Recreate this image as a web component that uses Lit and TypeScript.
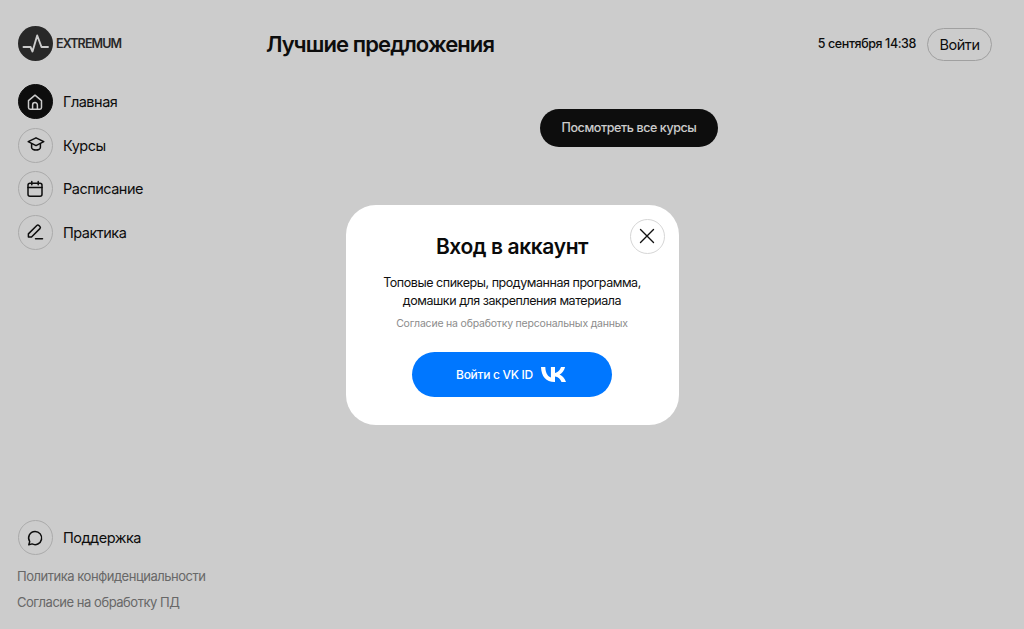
import { LitElement, html, css, svg } from 'lit';
import { customElement } from 'lit/decorators.js';

const navItems = [
  {
    label: 'Главная',
    active: true,
    icon: svg`<path d="M3.5 8.6 10 3.2l6.500 5.400v7a1.600 1.600 0 0 1-1.600 1.600H5.100a1.600 1.600 0 0 1-1.600-1.600z"/><path d="M7.600 17v-4a2.400 2.400 0 0 1 4.800 0v4"/>`,
  },
  {
    label: 'Курсы',
    icon: svg`<path d="M11 2.800 3.200 6.600 11 10.600l7.800-4z"/><path d="M6.600 8.800v3.800c0 1.200 2 2.400 4.400 2.400s4.400-1.200 4.400-2.400V8.800"/>`,
  },
  {
    label: 'Расписание',
    icon: svg`<rect x="3" y="4.200" width="14" height="13" rx="2"/><path d="M3 8.400h14M6.800 2.400v3.400M13.200 2.400v3.400"/>`,
  },
  {
    label: 'Практика',
    icon: svg`<path d="M3.400 15v-3.100l8.400-8.400a1.500 1.500 0 0 1 2.100 0l1 1a1.500 1.500 0 0 1 0 2.100l-8.400 8.400z"/><path d="M10.500 16.800h7"/>`,
  },
];

const icon = (body: unknown) => html`<svg class="ico" viewBox="1 0 20 20">${body}</svg>`;

@customElement('app-root')
export class AppRoot extends LitElement {
  static styles = css`
    :host {
      display: block;
      height: 629px;
      background: #fff;
      color: #111;
      font-family: Inter, "Liberation Sans", sans-serif;
      overflow: hidden;
    }
    .page {
      display: grid;
      grid-template-columns: 266px 1fr;
      height: 629px;
    }
    .side {
      display: flex;
      flex-direction: column;
      padding: 26px 0 19px 18px;
    }
    .logo {
      display: flex;
      align-items: center;
      gap: 3px;
      font-size: 12.5px;
      font-weight: 600;
      letter-spacing: -0.9px;
      color: #333;
    }
    .logo svg {
      width: 35px;
      height: 35px;
      display: block;
    }
    .nav {
      display: flex;
      flex-direction: column;
      gap: 8.6px;
      margin-top: 23px;
    }
    .item {
      display: flex;
      align-items: center;
      gap: 10px;
      font-size: 14.5px;
      font-weight: 400;
      letter-spacing: -0.5px;
    }
    .circle {
      width: 35px;
      height: 35px;
      box-sizing: border-box;
      border-radius: 50%;
      border: 1px solid #d6d6d6;
      display: flex;
      align-items: center;
      justify-content: center;
      flex: none;
    }
    .active .circle {
      background: #111;
      border-color: #111;
      color: #fff;
    }
    .ico {
      width: 20px;
      height: 20px;
      fill: none;
      stroke: currentColor;
      stroke-width: 1.5;
      stroke-linecap: round;
      stroke-linejoin: round;
    }
    .bottom {
      margin-top: auto;
    }
    .links {
      display: flex;
      flex-direction: column;
      gap: 10px;
      margin-top: 13px;
      margin-left: -1px;
      font-size: 13px;
      line-height: 16px;
      letter-spacing: -0.47px;
      color: #828282;
    }
    .main {
      display: flex;
      flex-direction: column;
      padding: 25px 32px 0 0;
    }
    .head {
      display: flex;
      align-items: center;
      min-height: 38px;
    }
    h1 {
      margin: -1px 0 0 0;
      font-size: 22px;
      line-height: 38px;
      font-weight: 600;
      letter-spacing: -0.9px;
    }
    .date {
      margin: -1px 0 0 auto;
      font-size: 12.5px;
      font-weight: 500;
      letter-spacing: -0.4px;
    }
    .login {
      margin-left: 11px;
      height: 33px;
      width: 65px;
      box-sizing: border-box;
      border: 1px solid #c8c8c8;
      border-radius: 17px;
      display: flex;
      align-items: center;
      justify-content: center;
      font-size: 14.5px;
      letter-spacing: -0.45px;
    }
    .more-wrap {
      display: flex;
      margin-top: 46px;
      padding-left: 274px;
    }
    .more {
      width: 178px;
      height: 38px;
      box-sizing: border-box;
      padding-bottom: 2px;
      border-radius: 19px;
      background: #111;
      color: #fff;
      display: flex;
      align-items: center;
      justify-content: center;
      font-size: 12.5px;
      font-weight: 500;
      letter-spacing: -0.4px;
    }
    .overlay {
      position: fixed;
      inset: 0;
      background: rgba(0, 0, 0, 0.2);
      display: flex;
      align-items: flex-start;
      justify-content: center;
      padding-top: 205px;
    }
    .modal {
      position: relative;
      width: 333px;
      height: 220px;
      box-sizing: border-box;
      padding-top: 29px;
      border-radius: 30px;
      background: #fff;
      display: flex;
      flex-direction: column;
      align-items: center;
      text-align: center;
    }
    .close {
      position: absolute;
      top: 14px;
      right: 14px;
      width: 35px;
      height: 35px;
      box-sizing: border-box;
      padding-bottom: 1px;
      border: 1px solid #d6d6d6;
      border-radius: 50%;
      display: flex;
      align-items: center;
      justify-content: center;
    }
    .close svg {
      width: 16px;
      height: 16px;
      stroke: #111;
      stroke-width: 1.4;
      stroke-linecap: round;
      fill: none;
    }
    h2 {
      margin: 0;
      font-size: 21px;
      line-height: 26px;
      font-weight: 600;
      letter-spacing: -0.4px;
      color: #0a0a0a;
    }
    .text {
      margin-top: 14px;
      font-size: 12.5px;
      line-height: 17.5px;
      letter-spacing: -0.45px;
    }
    .agree {
      margin-top: 8px;
      font-size: 10.5px;
      line-height: 14px;
      letter-spacing: -0.2px;
      color: #8c8c8c;
    }
    .vk {
      margin-top: 20.5px;
      width: 200px;
      height: 45px;
      box-sizing: border-box;
      padding-right: 2px;
      border-radius: 23px;
      background: #0077ff;
      color: #fff;
      display: flex;
      align-items: center;
      justify-content: center;
      gap: 8px;
      font-size: 12px;
      font-weight: 500;
      letter-spacing: -0.3px;
    }
    .vk svg {
      width: 25px;
      height: 15px;
      fill: #fff;
      display: block;
    }
  `;

  render() {
    return html`
      <div class="page">
        <aside class="side">
          <div class="logo">
            <svg viewBox="0 0 35 35">
              <circle cx="17.5" cy="17.5" r="17.5" fill="#333"></circle>
              <path d="M5.500 21h7l2 4.500 4.700-16 4.300 11.500H30" fill="none" stroke="#fff" stroke-width="1.900" stroke-linecap="round" stroke-linejoin="round"></path>
            </svg>
            EXTREMUM
          </div>
          <nav class="nav">
            ${navItems.map(
              (item) => html`
                <div class="item ${item.active ? 'active' : ''}">
                  <span class="circle">${icon(item.icon)}</span>${item.label}
                </div>
              `
            )}
          </nav>
          <div class="bottom">
            <div class="item">
              <span class="circle">
                ${icon(svg`<path d="M10 3.400a6.600 6.600 0 1 1-2.900 12.500l-3.300.9.9-3.200A6.600 6.600 0 0 1 10 3.400z"/>`)}
              </span>
              Поддержка
            </div>
            <div class="links">
              <span>Политика конфиденциальности</span>
              <span>Согласие на обработку ПД</span>
            </div>
          </div>
        </aside>
        <main class="main">
          <div class="head">
            <h1>Лучшие предложения</h1>
            <span class="date">5 сентября 14:38</span>
            <span class="login">Войти</span>
          </div>
          <div class="more-wrap"><span class="more">Посмотреть все курсы</span></div>
        </main>
      </div>
      <div class="overlay">
        <div class="modal">
          <span class="close">
            <svg viewBox="0 0 16 16"><path d="M1.500 1.500l13 13M14.500 1.500l-13 13"></path></svg>
          </span>
          <h2>Вход в аккаунт</h2>
          <div class="text">Топовые спикеры, продуманная программа,<br />домашки для закрепления материала</div>
          <div class="agree">Согласие на обработку персональных данных</div>
          <div class="vk">
            Войти с VK ID
            <svg viewBox="0 0 25 15">
              <path d="M13.600 15C5.100 15 .3 9.400 0 0h4.300c.2 6.900 3.200 9.800 5.600 10.400V0H14v6c2.500-.3 5.100-3 6-6h4.100c-.7 3.700-3.500 6.400-5.500 7.500 2 .9 5.200 3.400 6.400 7.500h-4.500c-1-3-3.400-5.300-6.500-5.600V15z"></path>
            </svg>
          </div>
        </div>
      </div>
    `;
  }
}
